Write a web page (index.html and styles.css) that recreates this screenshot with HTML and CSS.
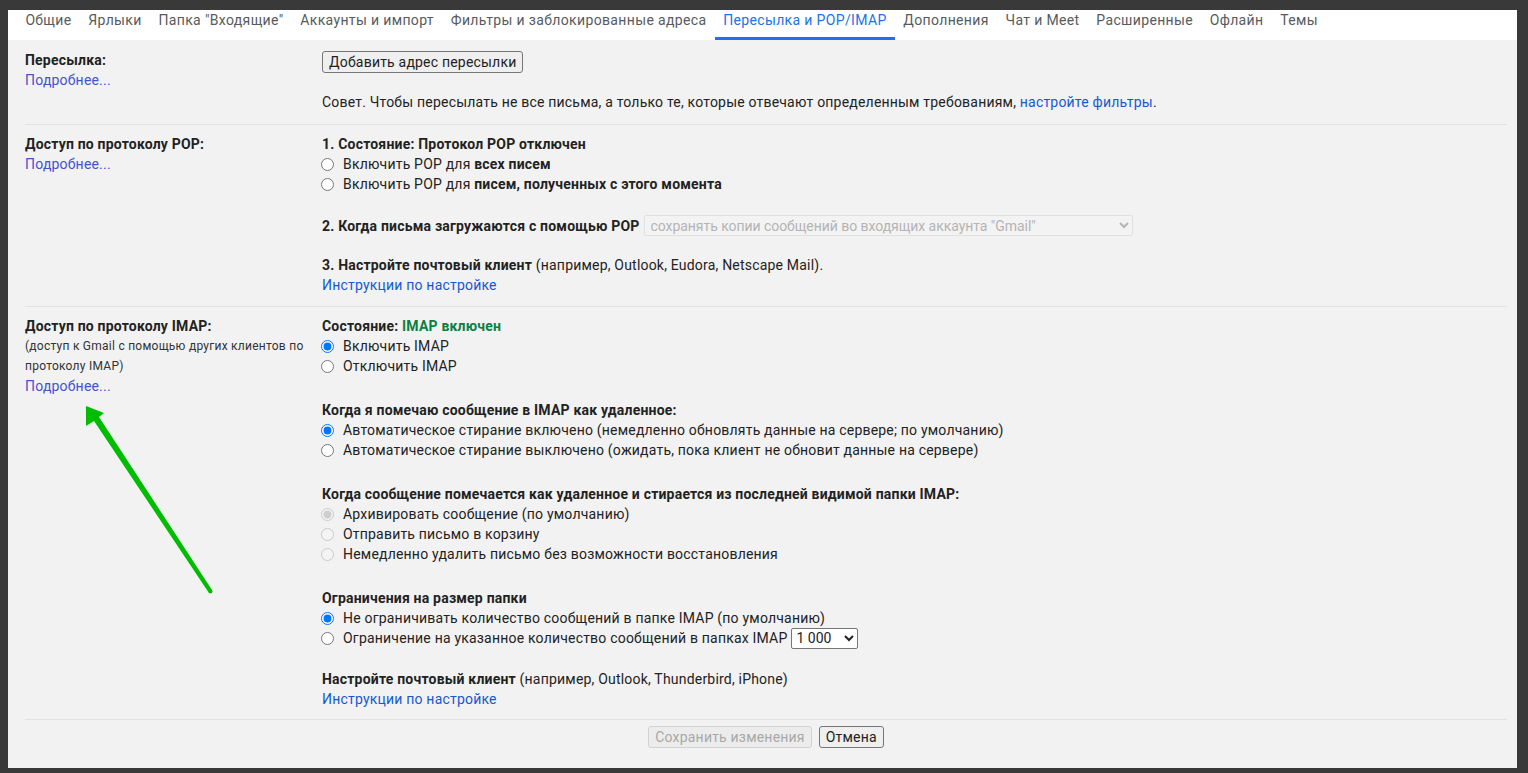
FILE: index.html
```html
<!DOCTYPE html>
<html lang="ru">
<head>
<meta charset="utf-8">
<title>Настройки</title>
<link rel="stylesheet" href="styles.css">
</head>
<body>
<div class="frame">
  <nav class="tabs">
    <span class="tab">Общие</span>
    <span class="tab">Ярлыки</span>
    <span class="tab">Папка "Входящие"</span>
    <span class="tab">Аккаунты и импорт</span>
    <span class="tab">Фильтры и заблокированные адреса</span>
    <span class="tab active">Пересылка и POP/IMAP</span>
    <span class="tab">Дополнения</span>
    <span class="tab">Чат и Meet</span>
    <span class="tab">Расширенные</span>
    <span class="tab">Офлайн</span>
    <span class="tab">Темы</span>
  </nav>

  <section class="row row-fwd">
    <div class="label-col">
      <div class="label">Пересылка:</div>
      <a class="more">Подробнее...</a>
    </div>
    <div class="value-col">
      <button class="btn btn-add">Добавить адрес пересылки</button>
      <p class="line tip">Совет. Чтобы пересылать не все письма, а только те, которые отвечают определенным требованиям, <a class="link">настройте фильтры</a>.</p>
    </div>
  </section>

  <section class="row row-pop">
    <div class="label-col">
      <div class="label">Доступ по протоколу POP:</div>
      <a class="more">Подробнее...</a>
    </div>
    <div class="value-col">
      <div class="line"><b>1. Состояние: Протокол POP отключен</b></div>
      <label class="opt"><input type="radio" name="pop"><span>Включить POP для <b>всех писем</b></span></label>
      <label class="opt"><input type="radio" name="pop"><span>Включить POP для <b>писем, полученных с этого момента</b></span></label>
      <div class="line select-line gap-21">
        <b>2. Когда письма загружаются с помощью POP</b>
        <select class="sel-pop" disabled><option>сохранять копии сообщений во входящих аккаунта "Gmail"</option></select>
      </div>
      <div class="line gap-19"><b>3. Настройте почтовый клиент</b> (например, Outlook, Eudora, Netscape Mail).</div>
      <div class="line"><a class="link">Инструкции по настройке</a></div>
    </div>
  </section>

  <section class="row row-imap">
    <div class="label-col">
      <div class="label">Доступ по протоколу IMAP:</div>
      <div class="note">(доступ к Gmail с помощью других клиентов по протоколу IMAP)</div>
      <a class="more">Подробнее...</a>
    </div>
    <div class="value-col">
      <div class="line"><b>Состояние: <span class="on">IMAP включен</span></b></div>
      <label class="opt"><input type="radio" name="imap" checked><span>Включить IMAP</span></label>
      <label class="opt"><input type="radio" name="imap"><span>Отключить IMAP</span></label>

      <div class="line gap-24"><b>Когда я помечаю сообщение в IMAP как удаленное:</b></div>
      <label class="opt"><input type="radio" name="del" checked><span>Автоматическое стирание включено (немедленно обновлять данные на сервере; по умолчанию)</span></label>
      <label class="opt"><input type="radio" name="del"><span>Автоматическое стирание выключено (ожидать, пока клиент не обновит данные на сервере)</span></label>

      <div class="line gap-24"><b>Когда сообщение помечается как удаленное и стирается из последней видимой папки IMAP:</b></div>
      <label class="opt"><input type="radio" name="exp" checked disabled><span>Архивировать сообщение (по умолчанию)</span></label>
      <label class="opt"><input type="radio" name="exp" disabled><span>Отправить письмо в корзину</span></label>
      <label class="opt"><input type="radio" name="exp" disabled><span>Немедленно удалить письмо без возможности восстановления</span></label>

      <div class="line gap-24"><b>Ограничения на размер папки</b></div>
      <label class="opt"><input type="radio" name="lim" checked><span>Не ограничивать количество сообщений в папке IMAP (по умолчанию)</span></label>
      <label class="opt"><input type="radio" name="lim"><span>Ограничение на указанное количество сообщений в папках IMAP</span><select class="sel-num"><option>1 000</option></select></label>

      <div class="line gap-21"><b>Настройте почтовый клиент</b> (например, Outlook, Thunderbird, iPhone)</div>
      <div class="line"><a class="link">Инструкции по настройке</a></div>
    </div>
  </section>

  <footer class="actions">
    <button class="btn" disabled>Сохранить изменения</button>
    <button class="btn">Отмена</button>
  </footer>
</div>

<svg class="arrow" width="1528" height="773" viewBox="0 0 1528 773" aria-hidden="true">
  <polygon points="86,406 104,413 99,417 212,590 209,593 94,421 86,426" fill="#00bd00"/>
  <circle cx="210.5" cy="591.5" r="2" fill="#00bd00"/>
</svg>
</body>
</html>
```

FILE: styles.css
```css
html, body {
  margin: 0;
  padding: 0;
}

body {
  background: #393939;
  width: 1528px;
  height: 773px;
  overflow: hidden;
  position: relative;
  font-family: Roboto, "Liberation Sans", Arial, sans-serif;
  font-size: 14px;
  letter-spacing: 0.2px;
  color: #222;
}

.frame {
  margin: 10px 0 0 8px;
  width: 1509px;
  height: 758px;
  background: #f2f2f2;
  box-sizing: border-box;
}

.tabs {
  display: flex;
  background: #fff;
  height: 30px;
  padding-left: 9px;
  box-sizing: border-box;
}

.tab {
  display: block;
  padding: 0 8.4px 7px;
  line-height: 20px;
  border-bottom: 3px solid transparent;
  color: #575b60;
  letter-spacing: 0.35px;
  white-space: nowrap;
}

.tab.active {
  color: #1a73e8;
  border-bottom-color: #1a73e8;
}

.row {
  display: grid;
  grid-template-columns: 297px 1fr;
  margin: 0 10px 0 17px;
  border-bottom: 1px solid #e2e2e2;
}

.row-fwd { padding: 10px 0 12px; }
.row-pop { padding: 9px 0 11px; }
.row-imap { padding: 9px 0 10px; }

.label-col {
  display: flex;
  flex-direction: column;
  align-items: flex-start;
  padding-right: 4px;
  line-height: 20px;
}

.label {
  font-weight: bold;
}

.note {
  font-size: 12px;
  line-height: 20px;
  letter-spacing: 0.25px;
  color: #333;
}

.more {
  color: #4353cf;
  cursor: pointer;
}

.link {
  color: #1558d6;
  cursor: pointer;
}

.value-col {
  display: flex;
  flex-direction: column;
  align-items: flex-start;
  line-height: 20px;
}

.line {
  margin: 0;
  min-height: 20px;
}

.tip { margin-top: 19px; }

.gap-19 { margin-top: 19px; }
.gap-21 { margin-top: 21px; }
.gap-24 { margin-top: 24px; }

.select-line {
  display: flex;
  align-items: center;
  height: 21px;
  gap: 4px;
}

.opt {
  display: flex;
  align-items: center;
  height: 20px;
  white-space: nowrap;
}

.opt input {
  width: 13px;
  height: 13px;
  margin: 0 9px 0 -1px;
}

.on {
  color: #0b8043;
}

.btn {
  font-family: Roboto, "Liberation Sans", Arial, sans-serif;
  font-size: 14px;
  letter-spacing: 0.2px;
  height: 22px;
  padding: 0 6px;
  line-height: 18px;
  color: #222;
  background: #efefef;
  border: 1px solid #767676;
  border-radius: 3px;
}

.btn:disabled {
  color: #a8a8a8;
  background: #ececec;
  border-color: #d2d2d2;
}

.btn-add {
  margin-top: 1px;
}

.sel-pop {
  width: 489px;
  height: 21px;
  font-family: Roboto, "Liberation Sans", Arial, sans-serif;
  font-size: 14px;
  letter-spacing: -0.05px;
  color: #9a9a9a;
  background: #f4f4f4;
  border: 1px solid #d9d9d9;
  border-radius: 2px;
  padding: 0 2px;
}

.sel-num {
  width: 67px;
  height: 21px;
  margin-left: 4px;
  font-family: Roboto, "Liberation Sans", Arial, sans-serif;
  font-size: 14px;
  color: #222;
  background: #fff;
  border: 1px solid #767676;
  border-radius: 2px;
}

.actions {
  display: flex;
  justify-content: center;
  gap: 7px;
  padding: 6px 10px 0 17px;
}

.arrow {
  position: absolute;
  left: 0;
  top: 0;
  pointer-events: none;
}
```
